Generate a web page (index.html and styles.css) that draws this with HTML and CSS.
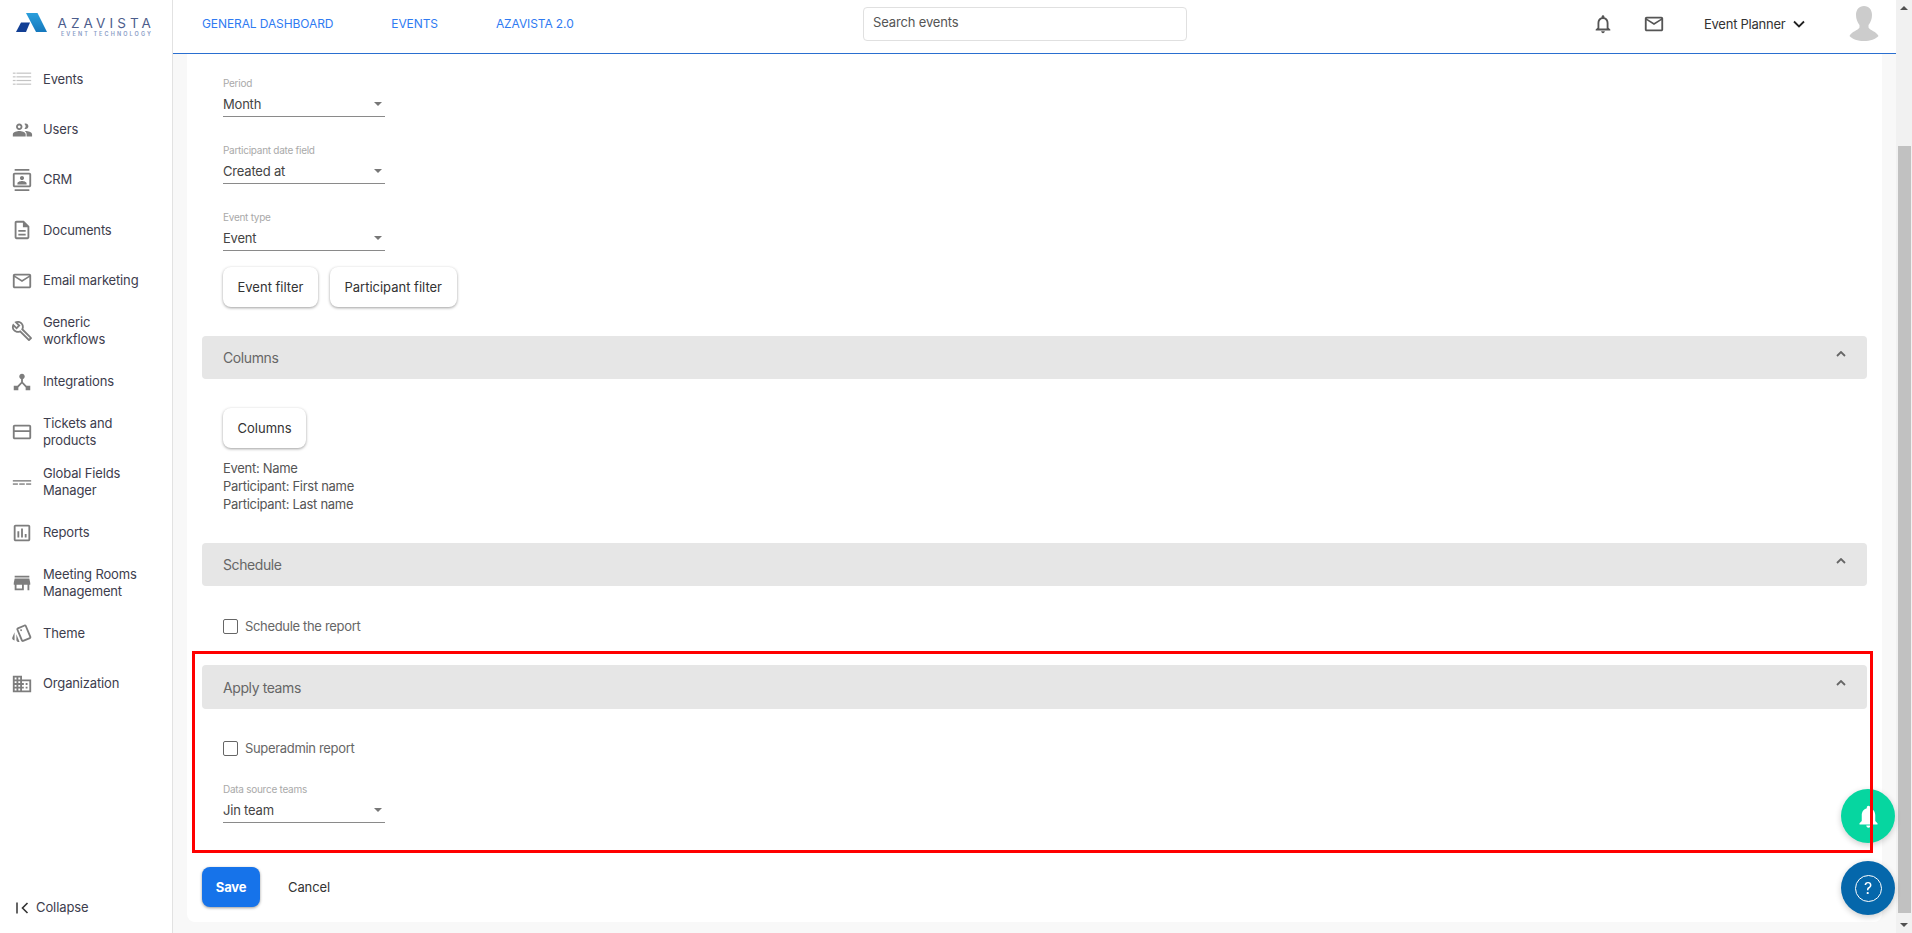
FILE: index.html
```html
<!DOCTYPE html>
<html lang="en">
<head>
<meta charset="utf-8">
<title>Azavista</title>
<link rel="stylesheet" href="styles.css">
</head>
<body>
<div class="app">
  <aside class="sidebar">
    <div class="logo">
      <svg class="logo-mark" viewBox="0 0 32 20" width="32" height="20"><defs><linearGradient id="lg1" x1="0" y1="0" x2="0" y2="1"><stop offset="0" stop-color="#2b9fdc"/><stop offset="1" stop-color="#1478bd"/></linearGradient></defs><polygon points="10,0 21.500,0 31,19 20,19" fill="url(#lg1)"/><polygon points="0,19 5,9.500 14,9.500 10,19" fill="#123f94"/></svg>
      <div class="logo-text"><div class="logo-name">AZAVISTA</div><div class="logo-sub">EVENT TECHNOLOGY</div></div>
    </div>
    <nav class="menu">
      <a class="item"><svg class="ico" viewBox="0 0 24 24"><g fill="#c4c4c4"><rect x="2" y="5" width="3" height="1.300"/><rect x="6" y="5" width="16" height="1.300"/><rect x="2" y="9" width="3" height="1.300"/><rect x="6" y="9" width="16" height="1.300"/><rect x="2" y="13" width="3" height="1.300"/><rect x="6" y="13" width="16" height="1.300"/><rect x="2" y="17" width="3" height="1.300"/><rect x="6" y="17" width="16" height="1.300"/></g></svg><span>Events</span></a>
      <a class="item"><svg class="ico" viewBox="0 0 24 24"><path fill-rule="evenodd" d="M16 11c1.660 0 2.990-1.340 2.990-3S17.660 5 16 5c-.5 0-1 .12-1.400.34C15.400 6 16 7 16 8s-.6 2-1.400 2.660c.4.220.9.340 1.400.340zM9 12c2 0 3.500-1.600 3.500-3.500S11 5 9 5 5.500 6.600 5.500 8.500 7 12 9 12zm0-5c.8 0 1.500.7 1.500 1.500S9.800 10 9 10s-1.500-.7-1.500-1.500S8.200 7 9 7zM9 13c-2.330 0-7 1.170-7 3.500V19h14v-2.500c0-2.330-4.670-3.500-7-3.500zm7 0c-.29 0-.62.020-.97.050 1.160.84 1.970 1.970 1.970 3.450V19h6v-2.500c0-2.330-4.670-3.500-7-3.500z"/></svg><span>Users</span></a>
      <a class="item"><svg class="ico" viewBox="0 0 24 24"><path d="M20 0H4v2h16V0zM4 24h16v-2H4v2zM20 4H4c-1.100 0-2 .9-2 2v12c0 1.100.9 2 2 2h16c1.100 0 2-.9 2-2V6c0-1.100-.9-2-2-2zm0 14H4V6h16v12zM12 12c1.240 0 2.250-1.010 2.250-2.250S13.240 7.500 12 7.500 9.750 8.510 9.750 9.750 10.760 12 12 12zm5 3.500c0-1.670-3.330-2.500-5-2.500s-5 .83-5 2.500V17h10v-1.500z"/></svg><span>CRM</span></a>
      <a class="item"><svg class="ico" viewBox="0 0 24 24"><path d="M8 16h8v2H8zm0-4h8v2H8zm6-10H6c-1.100 0-2 .9-2 2v16c0 1.100.89 2 1.990 2H18c1.100 0 2-.9 2-2V8l-6-6zm4 18H6V4h7v5h5v11z"/></svg><span>Documents</span></a>
      <a class="item"><svg class="ico" viewBox="0 0 24 24"><path d="M20 4H4c-1.100 0-1.990.9-1.990 2L2 18c0 1.100.9 2 2 2h16c1.100 0 2-.9 2-2V6c0-1.100-.9-2-2-2zm0 14H4V8l8 5 8-5v10zm-8-7L4 6h16l-8 5z"/></svg><span>Email marketing</span></a>
      <a class="item"><svg class="ico" viewBox="0 0 24 24"><path d="M22.610 18.990l-9.080-9.080c.93-2.340.45-5.100-1.440-7C9.790.61 6.210.4 3.660 2.260L7.500 6.110 6.080 7.520 2.250 3.690C.39 6.230.6 9.820 2.900 12.110c1.860 1.860 4.570 2.350 6.890 1.480l9.110 9.110c.39.39 1.020.39 1.410 0l2.300-2.300c.4-.38.4-1.010 0-1.410zm-3 1.600l-9.460-9.460c-.61.45-1.290.72-2 .82-1.360.2-2.790-.21-3.830-1.250C3.370 9.760 2.930 8.500 3 7.260l3.090 3.090 4.240-4.240-3.090-3.090c1.240-.07 2.490.37 3.440 1.310 1.080 1.080 1.490 2.570 1.240 3.960-.12.71-.42 1.370-.88 1.960l9.450 9.450-.88.88z"/></svg><span>Generic workflows</span></a>
      <a class="item"><svg class="ico" viewBox="0 0 24 24"><path d="M17 16l-4-4V8.820C14.160 8.400 15 7.300 15 6c0-1.660-1.340-3-3-3S9 4.340 9 6c0 1.300.84 2.400 2 2.820V12l-4 4H3v5h5v-3.050l4-4.200 4 4.200V21h5v-5h-4z"/></svg><span>Integrations</span></a>
      <a class="item"><svg class="ico" viewBox="0 0 24 24"><path d="M20 4H4c-1.110 0-1.990.89-1.990 2L2 18c0 1.110.89 2 2 2h16c1.110 0 2-.89 2-2V6c0-1.110-.89-2-2-2zm0 14H4v-6h16v6zm0-8H4V6h16v4z"/></svg><span>Tickets and products</span></a>
      <a class="item"><svg class="ico" viewBox="0 0 24 24"><g><rect x="2" y="10" width="20" height="1.500"/><rect x="2" y="13.500" width="5.500" height="1.500"/><rect x="9" y="13.500" width="6" height="1.500"/><rect x="16.500" y="13.500" width="5.500" height="1.500"/></g></svg><span>Global Fields Manager</span></a>
      <a class="item"><svg class="ico" viewBox="0 0 24 24"><path d="M19 3H5c-1.100 0-2 .9-2 2v14c0 1.100.9 2 2 2h14c1.100 0 2-.9 2-2V5c0-1.100-.9-2-2-2zm0 16H5V5h14v14zM7 10h2v7H7zm4-3h2v10h-2zm4 6h2v4h-2z"/></svg><span>Reports</span></a>
      <a class="item"><svg class="ico" viewBox="0 0 24 24"><path d="M20 4H4v2h16V4zm1 10v-2l-1-5H4l-1 5v2h1v6h10v-6h4v6h2v-6h1zm-9 4H6v-4h6v4z"/></svg><span>Meeting Rooms Management</span></a>
      <a class="item"><svg class="ico" viewBox="0 0 24 24"><path d="M2.530 19.650l1.340.56v-9.030l-2.430 5.860c-.41 1.020.08 2.190 1.090 2.610zm19.500-3.700L17.070 3.980c-.31-.75-1.040-1.210-1.810-1.230-.26 0-.53.04-.79.15L7.100 5.950c-.75.31-1.210 1.030-1.230 1.800-.01.27.04.54.15.8l4.960 11.970c.31.76 1.050 1.220 1.830 1.230.26 0 .52-.05.77-.15l7.360-3.050c1.020-.42 1.510-1.590 1.090-2.600zm-9.200 3.800L7.870 7.790l7.350-3.040h.01l4.950 11.950-7.350 3.050zM11 10c.55 0 1-.45 1-1s-.45-1-1-1-1 .45-1 1 .45 1 1 1zm-5.120 9.750c0 1.100.9 2 2 2h1.450l-3.450-8.340v6.340z"/></svg><span>Theme</span></a>
      <a class="item"><svg class="ico" viewBox="0 0 24 24"><path d="M12 7V3H2v18h20V7H12zM6 19H4v-2h2v2zm0-4H4v-2h2v2zm0-4H4V9h2v2zm0-4H4V5h2v2zm4 12H8v-2h2v2zm0-4H8v-2h2v2zm0-4H8V9h2v2zm0-4H8V5h2v2zm10 12h-8v-2h2v-2h-2v-2h2v-2h-2V9h8v10zm-2-8h-2v2h2v-2zm0 4h-2v2h2v-2z"/></svg><span>Organization</span></a>
    </nav>
    <div class="collapse">
      <svg class="collapse-ico" viewBox="0 0 13 12" width="13" height="12"><path d="M1 0.500V11.500" stroke="#333" stroke-width="1.500" fill="none"/><path d="M11.500 1L6.500 6l5 5" stroke="#333" stroke-width="1.600" fill="none"/></svg>
      <span>Collapse</span>
    </div>
  </aside>

  <div class="main">
    <header class="topbar">
      <nav class="topnav">
        <a class="toplink">GENERAL DASHBOARD</a>
        <a class="toplink">EVENTS</a>
        <a class="toplink">AZAVISTA 2.0</a>
      </nav>
      <div class="search">Search events</div>
      <div class="top-right">
        <svg class="top-ico" viewBox="0 0 24 24"><path d="M12 22c1.100 0 2-.9 2-2h-4c0 1.100.89 2 2 2zm6-6v-5c0-3.070-1.640-5.640-4.500-6.320V4c0-.83-.67-1.500-1.500-1.500s-1.500.67-1.500 1.500v.68C7.630 5.360 6 7.920 6 11v5l-2 2v1h16v-1l-2-2zm-2 1H8v-6c0-2.480 1.510-4.500 4-4.500s4 2.020 4 4.500v6z"/></svg>
        <svg class="top-ico" viewBox="0 0 24 24"><path d="M20 4H4c-1.100 0-1.990.9-1.990 2L2 18c0 1.100.9 2 2 2h16c1.100 0 2-.9 2-2V6c0-1.100-.9-2-2-2zm0 14H4V8l8 5 8-5v10zm-8-7L4 6h16l-8 5z"/></svg>
        <div class="planner">Event Planner</div>
        <svg class="planner-chev" viewBox="0 0 12 8" width="12" height="8"><path d="M1 1.500l5 5 5-5" stroke="#222" stroke-width="1.800" fill="none"/></svg>
        <svg class="avatar" viewBox="0 0 30 36" width="30" height="36"><path fill="#cccccc" d="M15 1c-5 0-8 3.800-8 9 0 4 1.500 7.500 3.500 10v2.500C9 25.500 2.500 26.500 0.500 31 3 34 9 36 15 36s12-2 14.500-5c-2-4.500-8.500-5.500-10-8.500V20c2-2.500 3.500-6 3.500-10 0-5.200-3-9-8-9z"/></svg>
      </div>
    </header>

    <div class="content">
      <main class="card">
        <div class="body first">
          <div class="field"><label class="field-label">Period</label><div class="select"><span>Month</span><i class="caret"></i></div></div>
          <div class="field"><label class="field-label">Participant date field</label><div class="select"><span>Created at</span><i class="caret"></i></div></div>
          <div class="field"><label class="field-label">Event type</label><div class="select"><span>Event</span><i class="caret"></i></div></div>
          <div class="btn-row"><button class="btn">Event filter</button><button class="btn">Participant filter</button></div>
        </div>

        <section class="acc">
          <div class="acc-head"><span>Columns</span><svg class="acc-chev" viewBox="0 0 10 6" width="10" height="6"><path d="M1 5l4-4 4 4" stroke="#666" stroke-width="1.800" fill="none"/></svg></div>
          <div class="body cols">
            <button class="btn">Columns</button>
            <ul class="col-list"><li>Event: Name</li><li>Participant: First name</li><li>Participant: Last name</li></ul>
          </div>
        </section>

        <section class="acc sched">
          <div class="acc-head"><span>Schedule</span><svg class="acc-chev" viewBox="0 0 10 6" width="10" height="6"><path d="M1 5l4-4 4 4" stroke="#666" stroke-width="1.800" fill="none"/></svg></div>
          <div class="body">
            <div class="check"><i class="box"></i><span>Schedule the report</span></div>
          </div>
        </section>

        <section class="acc teams">
          <div class="acc-head tall"><span>Apply teams</span><svg class="acc-chev" viewBox="0 0 10 6" width="10" height="6"><path d="M1 5l4-4 4 4" stroke="#666" stroke-width="1.800" fill="none"/></svg></div>
          <div class="body">
            <div class="check tight"><i class="box"></i><span>Superadmin report</span></div>
            <div class="field data-field"><label class="field-label">Data source teams</label><div class="select"><span>Jin team</span><i class="caret"></i></div></div>
          </div>
        </section>

        <div class="actions"><button class="save">Save</button><a class="cancel">Cancel</a></div>
      </main>
    </div>
  </div>

  <div class="scrollbar">
    <div class="sb-btn"><i class="sb-up"></i></div>
    <div class="sb-track"><div class="sb-thumb"></div></div>
    <div class="sb-btn"><i class="sb-down"></i></div>
  </div>
</div>

<div class="fab fab-green"><svg viewBox="0 0 24 24" width="27" height="27"><path fill="#fff" d="M12 22c1.100 0 2-.9 2-2h-4c0 1.100.9 2 2 2zm6-6v-5c0-3.070-1.630-5.640-4.500-6.320V4c0-.83-.67-1.500-1.500-1.500s-1.500.67-1.500 1.500v.68C7.640 5.360 6 7.920 6 11v5l-2 2v1h16v-1l-2-2z"/></svg></div>
<div class="fab fab-blue"><div class="help">?</div></div>
<div class="highlight"></div>
</body>
</html>
```

FILE: styles.css
```css
* { box-sizing: border-box; }
html, body { margin: 0; height: 100%; overflow: hidden; }
body { font-family: "Inter", "Open Sans", sans-serif; font-size: 13px; color: #333; background: #fff; }
button { font: inherit; }

.app { display: flex; height: 933px; }

/* sidebar */
.sidebar { width: 173px; flex: none; display: flex; flex-direction: column; border-right: 1px solid #e2e2e2; background: #fff; }
.logo { height: 54px; flex: none; display: flex; align-items: flex-start; padding: 13px 0 0 16px; gap: 8px; }
.logo-mark { flex: none; }
.logo-text { display: flex; flex-direction: column; align-items: flex-end; width: 95px; }
.logo-name { font-size: 13.500px; line-height: 14px; margin-top: 3px; letter-spacing: 4.100px; margin-right: -4px; color: #4c5d8c; white-space: nowrap; }
.logo-sub { font-size: 5.500px; line-height: 7px; margin-top: 1px; letter-spacing: 2.100px; margin-right: -2px; color: #8a9cc6; font-weight: 600; white-space: nowrap; }
.menu { display: flex; flex-direction: column; }
.item { height: 50.400px; display: flex; align-items: center; gap: 10px; padding: 0 20px 0 11px; line-height: 17px; color: #3d3d4d; letter-spacing: -.15px; }
.ico { width: 22px; height: 22px; flex: none; fill: #7d7d7d; }
.collapse { margin-top: auto; display: flex; align-items: center; gap: 7px; padding: 0 0 17px 16px; line-height: 17px; color: #3d3d4d; letter-spacing: -.1px; }

/* main */
.main { flex: 1; min-width: 0; display: flex; flex-direction: column; background: #f8f8f8; }
.topbar { height: 54px; flex: none; display: flex; align-items: center; background: #fff; border-bottom: 1px solid #2a6fd0; }
.topnav { display: flex; gap: 58px; padding-left: 29px; width: 690px; flex: none; margin-top: -6px; }
.toplink { font-size: 12px; color: #2f7bf2; white-space: nowrap; letter-spacing: -.1px; }
.search { width: 324px; height: 34px; flex: none; margin-top: -5px; border: 1px solid #e0e0e0; border-radius: 4px; padding: 0 9px; line-height: 29px; color: #555; letter-spacing: -.15px; }
.top-right { flex: 1; height: 100%; display: flex; align-items: center; padding: 0 0 5px 405px; }
.top-ico { width: 22px; height: 22px; fill: #555; flex: none; margin-right: 29px; }
.planner { white-space: nowrap; color: #333; margin-left: 10px; margin-right: 8px; letter-spacing: -.25px; }
.planner-chev { flex: none; margin-right: 44px; }
.avatar { flex: none; margin-top: -3px; }

.content { flex: 1; min-height: 0; padding: 0 14px 11px 14px; }
.card { height: 100%; background: #fff; border-radius: 0 0 8px 8px; padding: 0 15px; }

.body { padding-left: 21px; }
.body.first { padding-top: 23px; }
.field { width: 162px; margin-bottom: 27px; }
.field-label { display: block; font-size: 10px; line-height: 12px; color: #a9a9a9; letter-spacing: -.27px; }
.select { display: flex; justify-content: space-between; align-items: center; height: 28px; padding: 2px 3px 0 0; border-bottom: 1px solid #8a8a8a; color: #444; line-height: 20px; letter-spacing: -.2px; }
.caret { width: 0; height: 0; border-left: 4.500px solid transparent; border-right: 4.500px solid transparent; border-top: 4.500px solid #777; }
.btn-row { display: flex; gap: 12px; margin-top: -11px; }
.btn { height: 40px; padding: 0 14.500px; background: #fff; border: 0; border-radius: 8px; color: #333; box-shadow: 0 1px 3px rgba(0,0,0,.38); }

.acc { margin-top: 29px; }
.acc-head { height: 43px; display: flex; align-items: center; justify-content: space-between; padding: 0 21px; background: #e6e6e6; border-radius: 4px; font-size: 14px; color: #666; letter-spacing: -.4px; }
.acc-head.tall { height: 44px; }
.acc-chev { margin-top: -8px; }
.cols { padding-top: 29px; }
.col-list { list-style: none; margin: 11px 0 0; padding: 0; line-height: 18px; color: #555; letter-spacing: -.3px; }
.sched { margin-top: 30px; }
.check { display: flex; align-items: center; gap: 7px; height: 18px; margin-top: 31px; color: #666; letter-spacing: -.33px; }
.check.tight { margin-top: 30px; }
.box { width: 15px; height: 15px; border: 1px solid #666; border-radius: 2px; background: #fff; }
.teams { margin-top: 30px; }
.data-field { margin-top: 26px; margin-bottom: 0; }

.actions { display: flex; align-items: center; gap: 28px; margin-top: 44px; }
.save { width: 58px; height: 40px; border: 0; border-radius: 8px; background: #1673ea; color: #fff; font-weight: 700; box-shadow: 0 1px 3px rgba(0,0,0,.4); letter-spacing: -.2px; }
.cancel { color: #333; letter-spacing: -.1px; }

/* scrollbar */
.scrollbar { width: 16px; flex: none; display: flex; flex-direction: column; background: #f1f1f1; }
.sb-btn { height: 16px; flex: none; display: flex; align-items: center; justify-content: center; }
.sb-up { width: 0; height: 0; border-left: 4px solid transparent; border-right: 4px solid transparent; border-bottom: 4px solid #505050; }
.sb-down { width: 0; height: 0; border-left: 4px solid transparent; border-right: 4px solid transparent; border-top: 4px solid #505050; }
.sb-track { flex: 1; padding: 130px 1px 4px 2px; }
.sb-thumb { height: 100%; background: #c1c1c1; }

/* floating */
.fab { position: fixed; left: 1841px; width: 54px; height: 54px; border-radius: 50%; display: flex; align-items: center; justify-content: center; box-shadow: 0 2px 6px rgba(0,0,0,.2); }
.fab-green { top: 789px; background: #06d6a0; }
.fab-blue { top: 861px; background: #0567ab; }
.help { width: 27px; height: 27px; border: 1.500px solid #fff; border-radius: 50%; color: #fff; font-size: 16px; line-height: 24px; text-align: center; }
.highlight { position: fixed; left: 192px; top: 651px; width: 1681px; height: 202px; border: 3px solid #f00; pointer-events: none; }
```
